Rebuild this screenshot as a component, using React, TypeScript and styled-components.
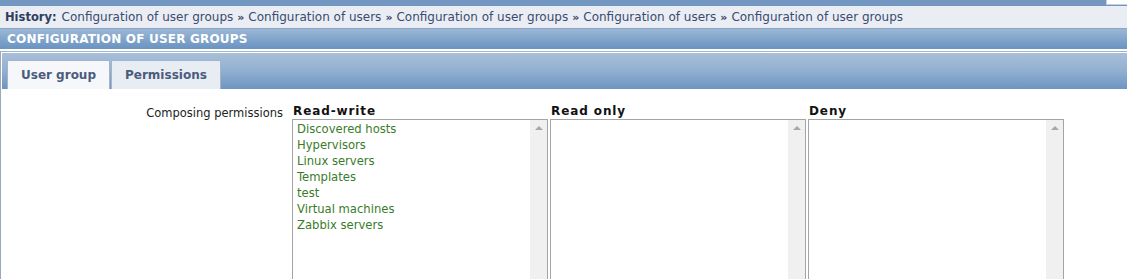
import React from "react";
import styled, { createGlobalStyle } from "styled-components";

const GlobalStyle = createGlobalStyle`
  html, body {
    margin: 0;
    padding: 0;
    background: #ffffff;
  }
  body {
    font-family: "DejaVu Sans", Verdana, sans-serif;
    font-size: 11px;
    color: #222222;
    overflow: hidden;
  }
`;

const readWrite = [
  "Discovered hosts",
  "Hypervisors",
  "Linux servers",
  "Templates",
  "test",
  "Virtual machines",
  "Zabbix servers",
];

const history = [
  "Configuration of user groups",
  "Configuration of users",
  "Configuration of user groups",
  "Configuration of users",
  "Configuration of user groups",
];

const PermissionList: React.FC<{ title: string; items?: string[] }> = ({ title, items }) => (
  <Column>
    <ColumnTitle>{title}</ColumnTitle>
    <ListBox>
      <ListItems>
        {items?.map((item) => (
          <ListItem key={item}>{item}</ListItem>
        ))}
      </ListItems>
      <Scrollbar>
        <ArrowUp />
      </Scrollbar>
    </ListBox>
  </Column>
);

const App: React.FC = () => {
  return (
    <>
      <GlobalStyle />
      <Page>
        <TopBar>
          <SearchStub />
        </TopBar>
        <HistoryBar>
          <HistoryLabel>History:</HistoryLabel>
          {history.map((h, i) => (
            <React.Fragment key={i}>
              <HistoryLink>{h}</HistoryLink>
              {i < history.length - 1 && <Sep>»</Sep>}
            </React.Fragment>
          ))}
        </HistoryBar>
        <PageHeader>CONFIGURATION OF USER GROUPS</PageHeader>
        <Panel>
          <TabNav>
            <Tab>User group</Tab>
            <Tab active>Permissions</Tab>
          </TabNav>
          <FormRow>
            <Label>Composing permissions</Label>
            <Columns>
              <PermissionList title="Read-write" items={readWrite} />
              <PermissionList title="Read only" />
              <PermissionList title="Deny" />
            </Columns>
          </FormRow>
        </Panel>
      </Page>
    </>
  );
};
export default App;

const Page = styled.div`
  display: flex;
  flex-direction: column;
  width: 1127px;
`;

const TopBar = styled.div`
  height: 6px;
  background: #7497c1;
  display: flex;
  justify-content: flex-end;
`;

const SearchStub = styled.div`
  width: 20px;
  height: 4px;
  background: #ffffff;
  border-left: 1px solid #c4cfdc;
  border-bottom: 1px solid #c4cfdc;
`;

const HistoryBar = styled.div`
  height: 22px;
  display: flex;
  align-items: center;
  padding-left: 5px;
  background: #eaeef4;
  color: #3b4a6e;
  font-size: 12px;
  white-space: nowrap;
`;

const HistoryLabel = styled.span`
  font-weight: bold;
  font-size: 11.5px;
  color: #2f3d5e;
  margin-right: 5px;
`;

const HistoryLink = styled.span`
  color: #3b4a6e;
`;

const Sep = styled.span`
  margin: 0 4px 0 4px;
  font-weight: bold;
  font-size: 11px;
  color: #2f3d5e;
`;

const PageHeader = styled.div`
  height: 20px;
  display: flex;
  align-items: center;
  padding-left: 7px;
  background: linear-gradient(#9db7d5, #7ea3cb 55%, #6b93c1);
  border-top: 1px solid #8aa6c6;
  color: #ffffff;
  font-weight: bold;
  font-size: 12px;
  letter-spacing: 0.2px;
`;

const Panel = styled.div`
  margin-top: 2px;
  border-top: 1px solid #a7b4c4;
  border-left: 1px solid #9aa8ba;
  padding-left: 1px;
  display: flex;
  flex-direction: column;
  flex: 1;
`;

const TabNav = styled.div`
  height: 36px;
  display: flex;
  align-items: flex-end;
  gap: 1px;
  padding-left: 5px;
  background: linear-gradient(#a8bfd9, #94b1d2 45%, #6d95c2);
  border-top: 1px solid #ffffff;
`;

const Tab = styled.div<{ active?: boolean }>`
  height: 29px;
  box-sizing: border-box;
  display: flex;
  align-items: center;
  padding: 0 13px;
  border: 1px solid #a4b4c9;
  border-bottom: none;
  border-radius: 2px 2px 0 0;
  background: ${(p) => (p.active ? "#e8ecf3" : "#f5f7fa")};
  color: #4b5b7e;
  font-weight: bold;
  font-size: 12px;
`;

const FormRow = styled.div`
  display: flex;
  padding-top: 15px;
`;

const Label = styled.div`
  width: 290px;
  text-align: right;
  padding-top: 2px;
  padding-right: 9px;
  box-sizing: border-box;
  color: #222222;
  font-size: 11.5px;
`;

const Columns = styled.div`
  display: flex;
  gap: 2px;
`;

const Column = styled.div`
  display: flex;
  flex-direction: column;
  width: 256px;
`;

const ColumnTitle = styled.div`
  height: 15px;
  padding-left: 1px;
  font-weight: bold;
  font-size: 12px;
  letter-spacing: 0.9px;
  color: #111111;
`;

const ListBox = styled.div`
  height: 180px;
  display: flex;
  border: 1px solid #a5a5a5;
  background: #ffffff;
`;

const ListItems = styled.div`
  flex: 1;
  padding: 1px 4px;
  display: flex;
  flex-direction: column;
`;

const ListItem = styled.div`
  height: 16px;
  line-height: 16px;
  color: #3a7b2b;
  font-size: 11.6px;
`;

const Scrollbar = styled.div`
  width: 17px;
  background: #f0f0f0;
  display: flex;
  justify-content: center;
  padding-top: 6px;
  box-sizing: border-box;
`;

const ArrowUp = styled.div`
  width: 0;
  height: 0;
  border-left: 4px solid transparent;
  border-right: 4px solid transparent;
  border-bottom: 4px solid #a8a8a8;
`;
